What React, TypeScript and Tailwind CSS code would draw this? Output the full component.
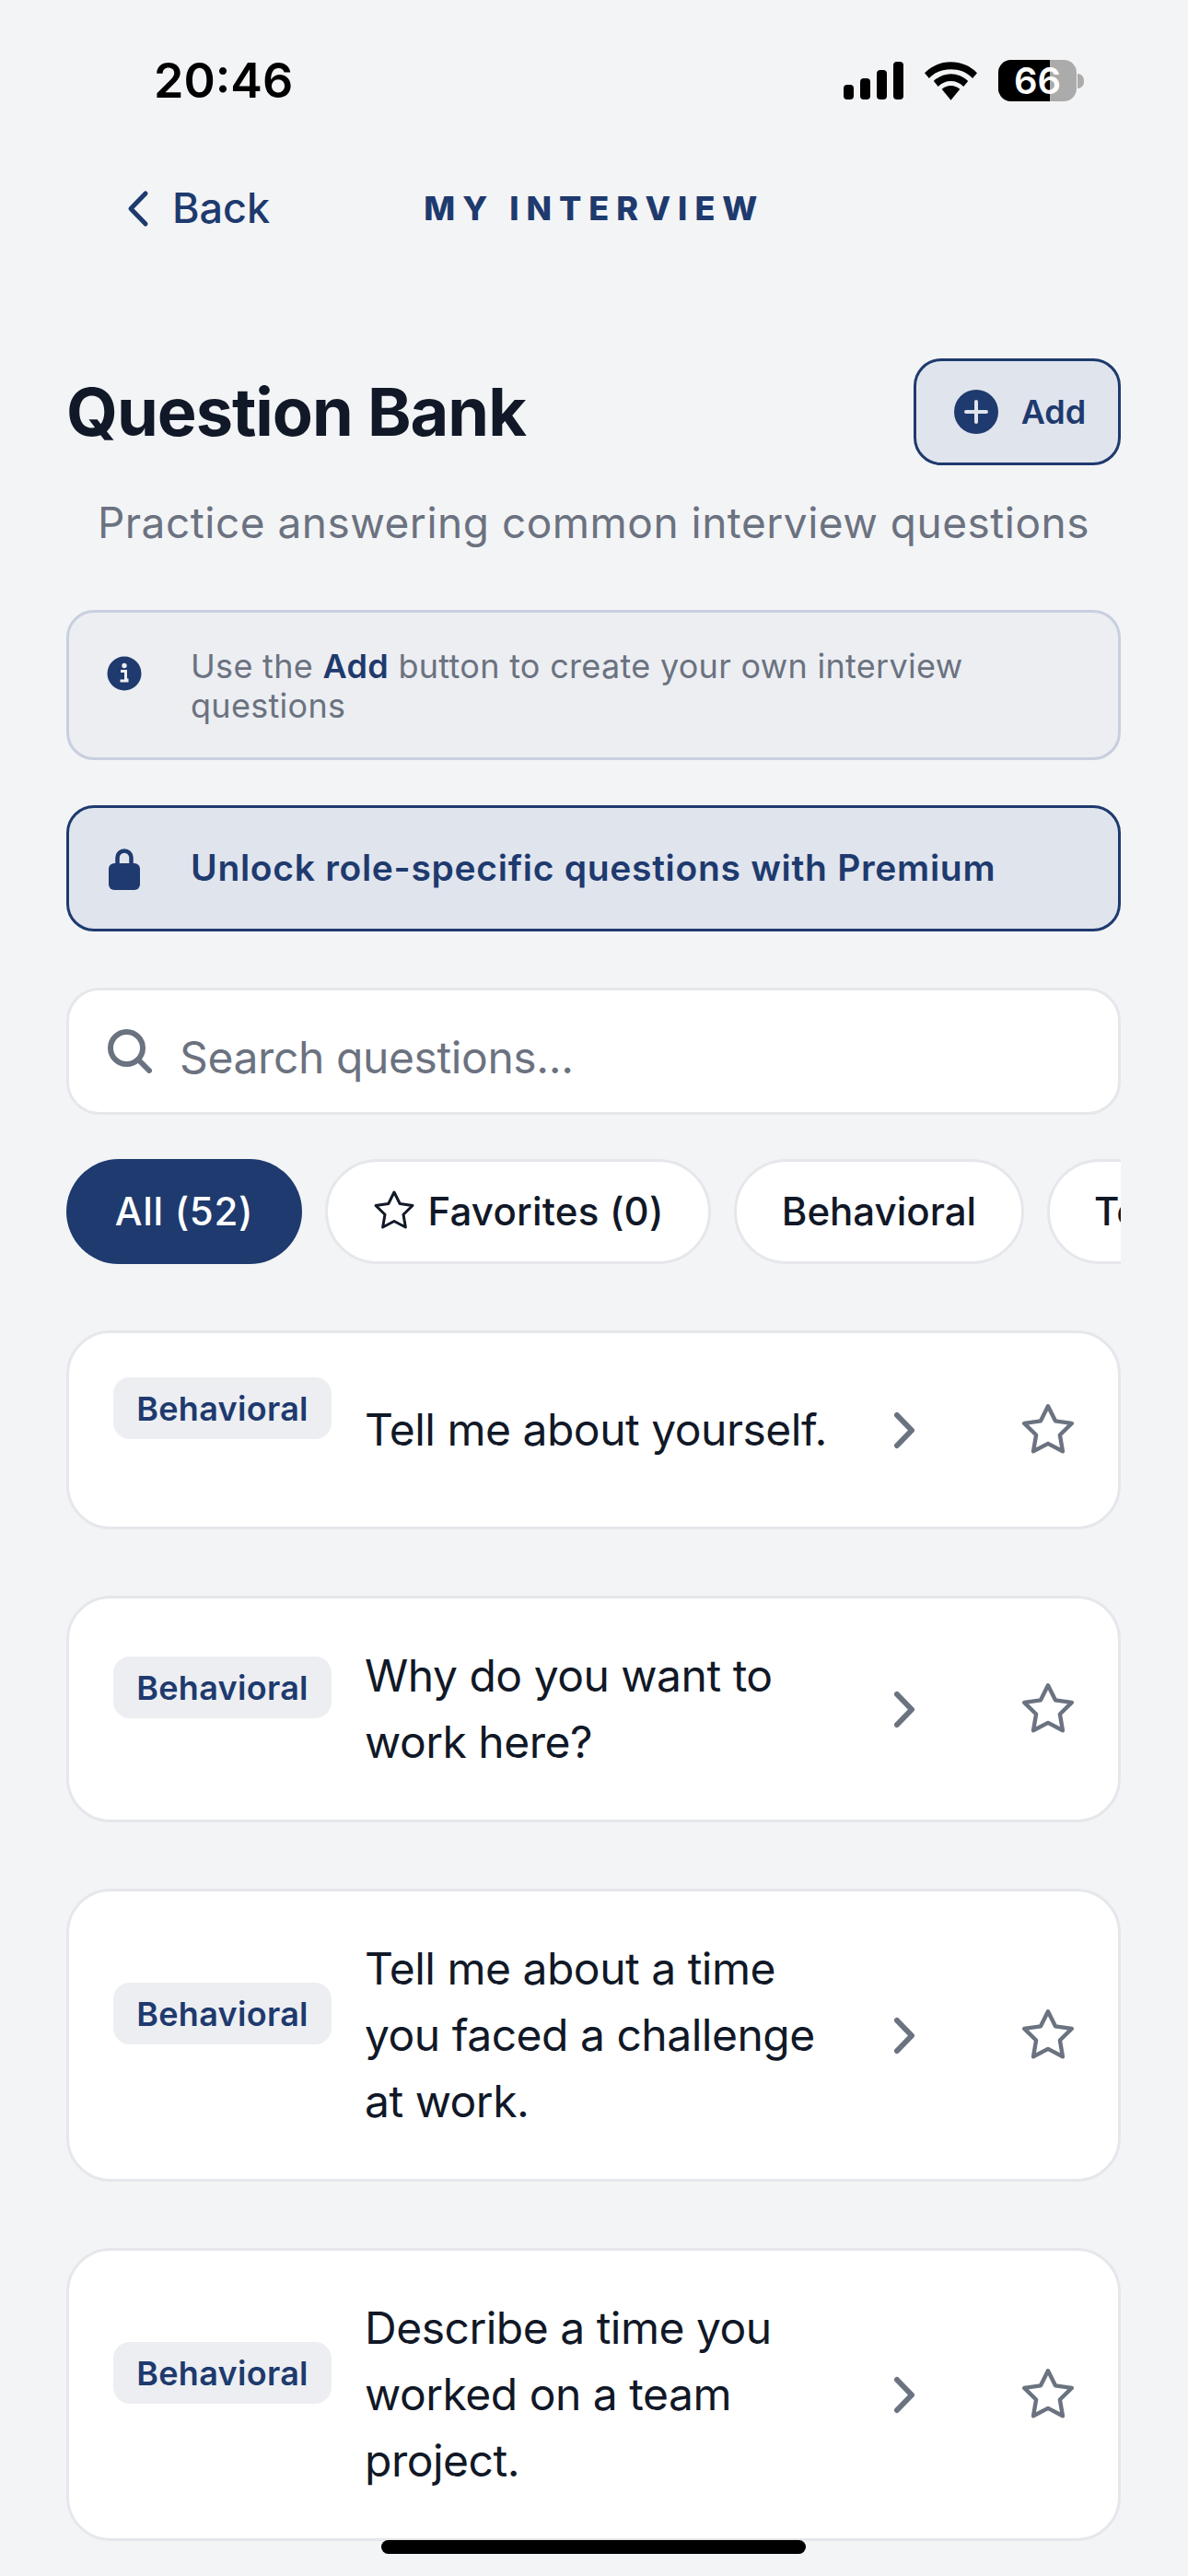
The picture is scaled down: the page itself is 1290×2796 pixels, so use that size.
const font = { fontFamily: "Inter, 'Noto Sans', sans-serif" };

const questions = [
  "Tell me about yourself.",
  "Why do you want to work here?",
  "Tell me about a time you faced a challenge at work.",
  "Describe a time you worked on a team project.",
];

function Star({ size, color, stroke }: { size: number; color: string; stroke: number }) {
  return (
    <svg width={size} height={size} viewBox="0 0 24 24" fill="none" stroke={color} strokeWidth={stroke} strokeLinejoin="round" className="shrink-0">
      <polygon points="12 2 15.09 8.26 22 9.27 17 14.14 18.18 21.02 12 17.77 5.82 21.02 7 14.14 2 9.27 8.91 8.26 12 2" />
    </svg>
  );
}

function QuestionCard({ text }: { text: string }) {
  return (
    <div className="flex items-center rounded-[48px] border-[3px] border-[#e5e7eb] bg-white py-[48px] pl-[48px]">
      <div className="mb-[47px] flex h-[67px] w-[237px] shrink-0 items-center justify-center rounded-[18px] bg-[#eceef2] text-[36px] font-semibold tracking-[0.3px] text-[#1e3a6e]">
        Behavioral
      </div>
      <p className="ml-[36px] w-[520px] shrink-0 text-[48px] leading-[72px] tracking-[-0.5px] text-[#111827]">{text}</p>
      <svg width="24" height="41" viewBox="0 0 24 41" fill="none" stroke="#6b7280" strokeWidth="6" strokeLinecap="round" strokeLinejoin="round" className="ml-[54px] shrink-0">
        <path d="M4 4 L20 20.5 L4 37" />
      </svg>
      <div className="ml-[113px] shrink-0">
        <Star size={62} color="#6b7280" stroke={1.7} />
      </div>
    </div>
  );
}

export default function App() {
  return (
    <div style={font} className="relative h-[2796px] w-[1290px] overflow-hidden bg-[#f3f4f6]">
      <div className="flex h-[175px] items-center justify-between pl-[167px] pr-[113px]">
        <span className="text-[52px] font-semibold text-black">20:46</span>
        <div className="flex items-center gap-[23px]">
          <svg width="65" height="41" viewBox="0 0 65 41" fill="#000">
            <rect x="0" y="25" width="11" height="16" rx="4" />
            <rect x="18" y="18" width="11" height="23" rx="4" />
            <rect x="36" y="9" width="11" height="32" rx="4" />
            <rect x="54" y="0" width="11" height="41" rx="4" />
          </svg>
          <svg width="57" height="42" viewBox="0 0 58 42" fill="#000">
            <path d="M29 0C18 0 8 4 0 12l5 6C11 11 20 8 29 8s18 3 24 10l5-6C50 4 40 0 29 0z" />
            <path d="M29 13c-7 0-14 3-19 8l5 6c4-4 9-6 14-6s10 2 14 6l5-6c-5-5-12-8-19-8z" />
            <path d="M29 26c-4 0-8 2-10 4l10 12 10-12c-2-2-6-4-10-4z" />
          </svg>
          <div className="flex items-center gap-[1px]">
            <div className="relative flex h-[45px] w-[85px] items-center justify-center rounded-[14px] bg-[#ababab] text-[40px] leading-[45px] font-semibold text-white">
              <div className="absolute inset-y-0 left-0 w-[56px] rounded-l-[14px] bg-black" />
              <span className="relative">66</span>
            </div>
            <div className="h-[16px] w-[7px] rounded-r-full bg-[#ababab]" />
          </div>
        </div>
      </div>

      <div className="flex h-[102px] items-center pl-[138px]">
        <div className="flex items-center text-[#1e3a6e]">
          <svg width="24" height="41" viewBox="0 0 24 41" fill="none" stroke="#1e3a6e" strokeWidth="5" strokeLinecap="round" strokeLinejoin="round">
            <path d="M20 4 L4 20.5 L20 37" />
          </svg>
          <span className="ml-[25px] text-[45px] font-medium">Back</span>
        </div>
        <span className="ml-[167px] text-[36px] font-extrabold tracking-[8px] text-[#1e3a6e]">MY INTERVIEW</span>
      </div>

      <div className="pl-[72px] pr-[73px]">
        <div className="mt-[112px] flex items-center justify-between">
          <h1 className="text-[72px] font-bold tracking-[-1px] text-[#111827]">Question Bank</h1>
          <div className="flex h-[116px] w-[225px] items-center justify-center rounded-[30px] border-[3px] border-[#1e3a6e] bg-[#e0e4ed] pl-[6px]">
            <svg width="48" height="48" viewBox="0 0 48 48" className="shrink-0">
              <circle cx="24" cy="24" r="24" fill="#1e3a6e" />
              <path d="M24 13V35M13 24H35" stroke="#e0e4ed" strokeWidth="4" strokeLinecap="round" />
            </svg>
            <span className="ml-[25px] text-[36px] font-semibold text-[#1e3a6e]">Add</span>
          </div>
        </div>
        <p className="mt-[33px] text-center text-[46px] leading-[58px] tracking-[0.5px] text-[#6b7280]">
          Practice answering common interview questions
        </p>

        <div className="mt-[66px] flex h-[163px] items-start rounded-[30px] border-[3px] border-[#c8cfdf] bg-[#eceef2] pl-[41px] pt-[37px]">
          <svg width="38" height="38" viewBox="0 0 38 38" className="mt-[10px] shrink-0">
            <circle cx="19" cy="19" r="18.5" fill="#1e3a6e" />
            <circle cx="19" cy="10.5" r="2.7" fill="#eceef2" />
            <path d="M15 16.5H20.5V26H23.5M14.5 27H23.5" fill="none" stroke="#eceef2" strokeWidth="3" />
          </svg>
          <p className="ml-[53px] w-[900px] text-[36px] leading-[43px] tracking-[0.3px] text-[#6b7280]">
            Use the <span className="font-semibold text-[#1e3a6e]">Add</span> button to create your own interview questions
          </p>
        </div>

        <div className="mt-[49px] flex h-[137px] items-center rounded-[30px] border-[3px] border-[#1e3a6e] bg-[#e0e4ed] pl-[43px]">
          <svg width="34" height="46" viewBox="0 0 34 46" className="shrink-0">
            <path d="M9.5 20V11a7.5 7.5 0 0 1 15 0V20" fill="none" stroke="#1e3a6e" strokeWidth="4.5" />
            <rect x="0" y="17" width="34" height="29" rx="6" fill="#1e3a6e" />
          </svg>
          <span className="ml-[55px] text-[39px] font-semibold tracking-[0.7px] text-[#1e3a6e]">Unlock role-specific questions with Premium</span>
        </div>

        <div className="mt-[61px] flex h-[138px] items-center rounded-[36px] border-[3px] border-[#e5e7eb] bg-white pl-[42px]">
          <svg width="48" height="48" viewBox="0 0 48 48" fill="none" stroke="#6b7280" strokeWidth="6" strokeLinecap="round" className="shrink-0">
            <circle cx="20.5" cy="20.5" r="17.5" />
            <path d="M33 33L45 45" />
          </svg>
          <span className="ml-[30px] pt-[13px] text-[48px] tracking-[-0.4px] text-[#6b7280]">Search questions...</span>
        </div>

        <div className="mt-[48px] flex h-[114px] gap-[25px] overflow-hidden">
          <div className="flex w-[256px] shrink-0 items-center justify-center rounded-full bg-[#1e3a6e] pb-[2px] text-[42px] font-medium tracking-[0.7px] text-white">All (52)</div>
          <div className="flex w-[419px] shrink-0 items-center justify-center rounded-full border-[3px] border-[#e5e7eb] bg-white pb-[2px] text-[42px] font-medium tracking-[0.2px] text-[#111827]">
            <span className="mr-[12px]"><Star size={48} color="#111827" stroke={1.5} /></span>
            Favorites (0)
          </div>
          <div className="flex w-[315px] shrink-0 items-center justify-center rounded-full border-[3px] border-[#e5e7eb] bg-white pb-[2px] text-[42px] font-medium text-[#111827]">Behavioral</div>
          <div className="flex w-[300px] shrink-0 items-center rounded-full border-[3px] border-[#e5e7eb] bg-white pb-[2px] pl-[48px] text-[42px] font-medium text-[#111827]">Technical</div>
        </div>

        <div className="mt-[72px] flex flex-col gap-[72px]">
          {questions.map((q) => (
            <QuestionCard key={q} text={q} />
          ))}
        </div>
      </div>

      <div className="absolute bottom-[24px] left-[414px] h-[15px] w-[461px] rounded-full bg-black" />
    </div>
  );
}
